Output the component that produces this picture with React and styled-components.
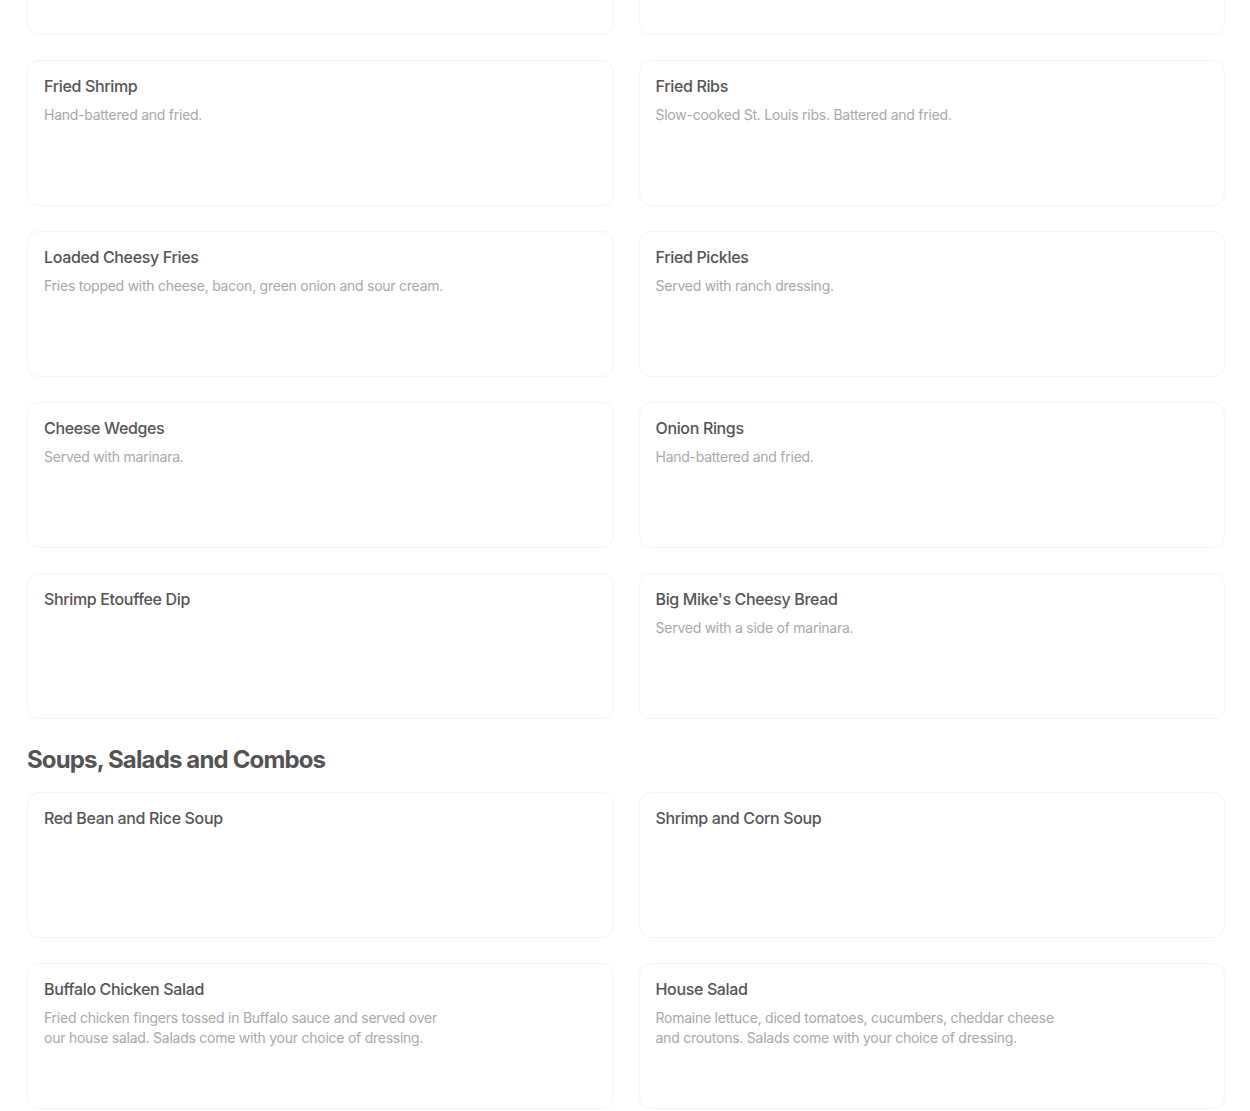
import React from 'react';
import styled, { createGlobalStyle } from 'styled-components';

const GlobalStyle = createGlobalStyle`
  html, body {
    margin: 0;
    padding: 0;
    background: #ffffff;
    overflow: hidden;
  }
  body {
    font-family: Inter, "Noto Sans", "Liberation Sans", sans-serif;
  }
`;

const Page = styled.div`
  padding: 0 25px 0 27px;
  margin-top: -111px;
`;

const Section = styled.section`
  display: flex;
  flex-direction: column;
`;

const SectionTitle = styled.h2`
  margin: 25px 0 16px 0;
  font-size: 24px;
  line-height: 32px;
  font-weight: 700;
  letter-spacing: -0.85px;
  color: #545454;
`;

const Grid = styled.div`
  display: grid;
  grid-template-columns: 1fr 1fr;
  column-gap: 25px;
  row-gap: 25px;
`;

const Card = styled.div`
  box-sizing: border-box;
  height: 146px;
  border: 1px solid #f4f4f4;
  border-radius: 12px;
  padding: 13px 16px;
  display: flex;
  flex-direction: column;
  gap: 7px;
`;

const Title = styled.div`
  font-size: 16px;
  line-height: 24px;
  font-weight: 500;
  letter-spacing: -0.35px;
  color: #545454;
`;

const Description = styled.div`
  font-size: 14px;
  line-height: 20px;
  letter-spacing: -0.25px;
  color: #a8a8a8;
  max-width: 414px;
`;

const appetizers = [
  { title: '', description: '' },
  { title: '', description: '' },
  { title: 'Fried Shrimp', description: 'Hand-battered and fried.' },
  { title: 'Fried Ribs', description: 'Slow-cooked St. Louis ribs. Battered and fried.' },
  { title: 'Loaded Cheesy Fries', description: 'Fries topped with cheese, bacon, green onion and sour cream.' },
  { title: 'Fried Pickles', description: 'Served with ranch dressing.' },
  { title: 'Cheese Wedges', description: 'Served with marinara.' },
  { title: 'Onion Rings', description: 'Hand-battered and fried.' },
  { title: 'Shrimp Etouffee Dip', description: '' },
  { title: "Big Mike's Cheesy Bread", description: 'Served with a side of marinara.' },
];

const soups = [
  { title: 'Red Bean and Rice Soup', description: '' },
  { title: 'Shrimp and Corn Soup', description: '' },
  {
    title: 'Buffalo Chicken Salad',
    description: 'Fried chicken fingers tossed in Buffalo sauce and served over our house salad. Salads come with your choice of dressing.',
  },
  {
    title: 'House Salad',
    description: 'Romaine lettuce, diced tomatoes, cucumbers, cheddar cheese and croutons. Salads come with your choice of dressing.',
  },
];

const MenuItem = ({ title, description }) => (
  <Card>
    {title && <Title>{title}</Title>}
    {description && <Description>{description}</Description>}
  </Card>
);

const App = () => (
  <Page>
    <GlobalStyle />
    <Section>
      <Grid>
        {appetizers.map((item, i) => (
          <MenuItem key={i} {...item} />
        ))}
      </Grid>
    </Section>
    <Section>
      <SectionTitle>Soups, Salads and Combos</SectionTitle>
      <Grid>
        {soups.map((item) => (
          <MenuItem key={item.title} {...item} />
        ))}
      </Grid>
    </Section>
  </Page>
);

export default App;
